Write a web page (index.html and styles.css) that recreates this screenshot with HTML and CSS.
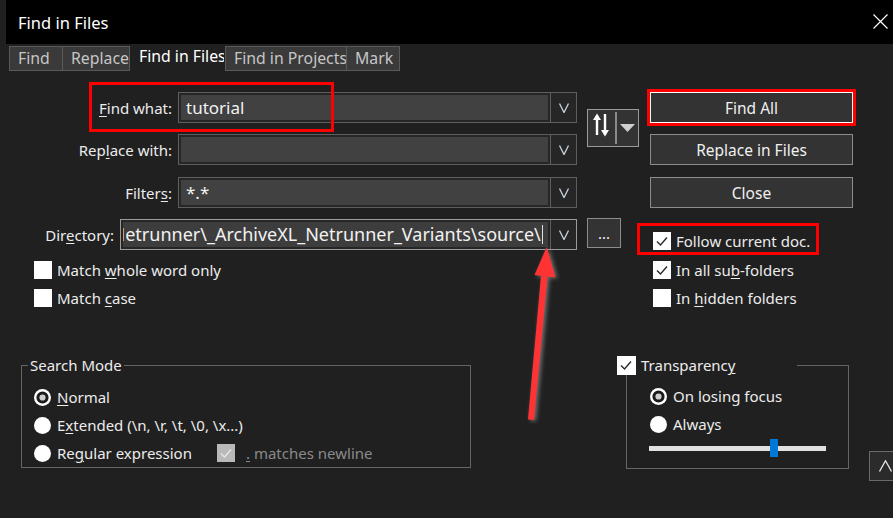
FILE: index.html
```html
<!DOCTYPE html>
<html>
<head>
<meta charset="utf-8">
<title>Find in Files</title>
<link rel="stylesheet" href="styles.css">
</head>
<body>
<div class="dialog">
  <header class="titlebar">
    <span class="title">Find in Files</span>
    <svg class="close" viewBox="0 0 15 15"><path d="M0.5 0.5 L14.5 14.5 M14.5 0.5 L0.5 14.5" stroke="#fff" stroke-width="1.2" fill="none"/></svg>
  </header>

  <nav class="tabs">
    <span class="tab t-find">Find</span>
    <span class="tab t-replace">Replace</span>
    <span class="tab active t-fif">Find in Files</span>
    <span class="tab t-fip">Find in Projects</span>
    <span class="tab t-mark">Mark</span>
  </nav>

  <div class="form">
    <label class="lbl r1"><u>F</u>ind what:</label>
    <div class="combo r1">
      <div class="field">tutorial</div>
      <div class="drop"><svg viewBox="0 0 10 10"><path d="M0.5 0.5 L5 9.5 L9.5 0.5" stroke="#c9d3e0" stroke-width="1.3" fill="none"/></svg></div>
    </div>

    <label class="lbl r3">Rep<u>l</u>ace with:</label>
    <div class="combo r3">
      <div class="field"></div>
      <div class="drop"><svg viewBox="0 0 10 10"><path d="M0.5 0.5 L5 9.5 L9.5 0.5" stroke="#c9d3e0" stroke-width="1.3" fill="none"/></svg></div>
    </div>

    <label class="lbl r5">Filter<u>s</u>:</label>
    <div class="combo r5">
      <div class="field">*.*</div>
      <div class="drop"><svg viewBox="0 0 10 10"><path d="M0.5 0.5 L5 9.5 L9.5 0.5" stroke="#c9d3e0" stroke-width="1.3" fill="none"/></svg></div>
    </div>

    <div class="dirrow r7">
      <label class="dirlbl">Dir<u>e</u>ctory:</label>
      <div class="combo focused">
        <div class="field dirfield"><span class="dirtext">Netrunner\_ArchiveXL_Netrunner_Variants\source\</span><span class="caret"></span></div>
        <div class="drop"><svg viewBox="0 0 10 10"><path d="M0.5 0.5 L5 9.5 L9.5 0.5" stroke="#c9d3e0" stroke-width="1.3" fill="none"/></svg></div>
      </div>
    </div>

    <button class="swap">
      <svg class="swap-arrows" viewBox="0 0 16 24"><path d="M4 22 V3" stroke="#fff" stroke-width="2.4"/><path d="M0 7 L4 0.5 L8 7 Z" fill="#fff"/><path d="M12 1 V20" stroke="#fff" stroke-width="2.4"/><path d="M8 17 L12 23.5 L16 17 Z" fill="#fff"/></svg>
      <span class="swap-sep"></span>
      <svg class="swap-tri" viewBox="0 0 15 8"><path d="M0 0 H15 L7.5 8 Z" fill="#cfcfcf"/></svg>
    </button>

    <button class="btn default r1">Find All</button>
    <button class="btn r3">Replace in Files</button>
    <button class="btn r5">Close</button>

    <button class="dots">...</button>

    <div class="chk follow">
      <span class="cb"><svg viewBox="0 0 18 18"><path d="M4 9.5 L7.5 13 L14 5.5" stroke="#2a2a2a" stroke-width="1.4" fill="none"/></svg></span>
      <span>Follow current doc.</span>
    </div>

    <div class="checks checks-left">
      <div class="chk"><span class="cb"></span><span>Match <u>w</u>hole word only</span></div>
      <div class="chk"><span class="cb"></span><span>Match <u>c</u>ase</span></div>
    </div>

    <div class="checks checks-right">
      <div class="chk">
        <span class="cb"><svg viewBox="0 0 18 18"><path d="M4 9.5 L7.5 13 L14 5.5" stroke="#2a2a2a" stroke-width="1.4" fill="none"/></svg></span>
        <span>In all su<u>b</u>-folders</span>
      </div>
      <div class="chk"><span class="cb"></span><span>In <u>h</u>idden folders</span></div>
    </div>
  </div>

  <div class="bottom">
    <fieldset class="group search">
      <legend>Search Mode</legend>
      <div class="radio">
        <svg class="rd" viewBox="0 0 17 17"><circle cx="8.5" cy="8.5" r="8.5" fill="#fff"/><circle cx="8.5" cy="8.5" r="4.6" fill="#cfcfcf" stroke="#1c1c1c" stroke-width="3"/></svg>
        <span><u>N</u>ormal</span>
      </div>
      <div class="radio">
        <svg class="rd" viewBox="0 0 17 17"><circle cx="8.5" cy="8.5" r="8.5" fill="#fff"/></svg>
        <span>E<u>x</u>tended (\n, \r, \t, \0, \x...)</span>
      </div>
      <div class="radio">
        <svg class="rd" viewBox="0 0 17 17"><circle cx="8.5" cy="8.5" r="8.5" fill="#fff"/></svg>
        <span class="rx-label">Re<u>g</u>ular expression</span>
        <span class="cb disabled"><svg viewBox="0 0 18 18"><path d="M4 9.5 L7.5 13 L14 5.5" stroke="#e6e6e6" stroke-width="1.4" fill="none"/></svg></span>
        <span class="dim"><u>.</u> matches newline</span>
      </div>
    </fieldset>

    <fieldset class="group transp">
      <legend class="tlegend">
        <span class="cb"><svg viewBox="0 0 18 18"><path d="M4 9.5 L7.5 13 L14 5.5" stroke="#2a2a2a" stroke-width="1.4" fill="none"/></svg></span>
        <span>Transparenc<u>y</u></span>
      </legend>
      <div class="radio">
        <svg class="rd" viewBox="0 0 17 17"><circle cx="8.5" cy="8.5" r="8.5" fill="#fff"/><circle cx="8.5" cy="8.5" r="4.6" fill="#cfcfcf" stroke="#1c1c1c" stroke-width="3"/></svg>
        <span>On losing focus</span>
      </div>
      <div class="radio">
        <svg class="rd" viewBox="0 0 17 17"><circle cx="8.5" cy="8.5" r="8.5" fill="#fff"/></svg>
        <span>Always</span>
      </div>
      <div class="slider">
        <span class="track"></span>
        <span class="thumb"></span>
      </div>
    </fieldset>

    <button class="mini"><svg viewBox="0 0 13 12"><path d="M0.5 11.5 L6.5 0.8 L12.5 11.5" stroke="#e6e6e6" stroke-width="1.3" fill="none"/></svg></button>
  </div>

  <div class="hl hl-find"></div>
  <div class="hl hl-follow"></div>

  <svg class="arrow" viewBox="0 0 893 518">
    <g class="arrow-shape">
      <path d="M541 276 L547.5 276.5 L534 420 L528 419.5 Z" fill="#f33"/>
      <path d="M546.7 247 L555.5 277.5 L534.5 275 Z" fill="#f33"/>
    </g>
  </svg>
</div>
</body>
</html>
```

FILE: styles.css
```css
* { box-sizing: border-box; }

body {
  margin: 0;
  background: #202020;
  font-family: "Noto Sans", "Open Sans", sans-serif;
  color: #ececec;
}

u { text-underline-offset: 2px; text-decoration-thickness: 1px; }

.dialog {
  position: relative;
  width: 893px;
  height: 518px;
  overflow: hidden;
  background: #202020;
}

/* title bar */
.titlebar {
  height: 44px;
  margin-left: 6px;
  padding: 0 5px 0 12px;
  background: #000;
  display: flex;
  align-items: center;
}
.title { font-size: 16.5px; color: #fff; }
.close { margin-left: auto; width: 15px; height: 15px; margin-top: -1px; }

/* tabs */
.tabs {
  display: flex;
  height: 25px;
  margin: 2px 0 0 9px;
}
.tab {
  height: 25px;
  border: 1px solid #5a5a5a;
  background: #3a3a3a;
  color: #c6c6c6;
  font-size: 15.8px;
  line-height: 23px;
  padding-left: 8px;
  overflow: hidden;
  white-space: nowrap;
  flex: none;
}
.t-find { width: 54px; }
.t-replace { width: 68px; margin-left: -1px; }
.t-fif { width: 95px; }
.t-fip { width: 122px; }
.t-mark { width: 54px; margin-left: -1px; }
.tab.active {
  border-color: transparent;
  background: transparent;
  color: #fff;
  line-height: 19px;
}

/* form grid */
.form {
  display: grid;
  grid-template-columns: 178px 399px 10px 52px 11px 203px;
  grid-template-rows: 31px 11px 31px 12px 31px 11px 31px 10px auto;
  margin-top: 21px;
}
.r1 { grid-row: 1; }
.r3 { grid-row: 3; }
.r5 { grid-row: 5; }
.r7 { grid-row: 7; }

.lbl {
  grid-column: 1;
  justify-self: end;
  align-self: center;
  padding-right: 6px;
  font-size: 15px;
  white-space: nowrap;
}

.combo {
  grid-column: 2;
  display: flex;
  height: 31px;
  border: 1px solid #5e5e5e;
  background: #262626;
}
.combo.focused { border-color: #9a9a9a; }
.field {
  flex: 1;
  min-width: 0;
  margin: 2px 0 2px 2px;
  background: #414141;
  padding-left: 5px;
  font-size: 17px;
  line-height: 25px;
  color: #f2f2f2;
  overflow: hidden;
  white-space: nowrap;
}
.dirfield {
  padding-left: 0;
  display: flex;
  align-items: center;
  background: #3d3d3d;
  font-size: 18px;
}
.dirtext { margin-left: -11.5px; flex: none; }
.caret { width: 1px; height: 19px; background: #e0e0e0; margin-left: 1px; flex: none; }
.drop {
  width: 26px;
  margin-left: 2px;
  border-left: 1px solid #5e5e5e;
  display: flex;
  align-items: center;
  justify-content: center;
  flex: none;
}
.drop svg { width: 10px; height: 10px; }

.dirrow {
  grid-column: 1 / 3;
  display: flex;
  justify-content: flex-end;
  align-items: center;
  gap: 6px;
}
.dirrow .combo { width: 457px; flex: none; }
.dirlbl { font-size: 15px; }

/* buttons */
button {
  font-family: inherit;
  color: #f0f0f0;
  padding: 0;
  margin: 0;
}
.btn {
  grid-column: 6;
  height: 31px;
  background: #333;
  border: 1px solid #8c8c8c;
  font-size: 15.5px;
}
.btn.default {
  border-color: #fff;
  outline: 3px solid #f00;
}

.swap {
  grid-column: 4;
  grid-row: 1 / 4;
  margin-top: 17px;
  height: 38px;
  background: #333;
  border: 1px solid #9a9a9a;
  display: flex;
  align-items: center;
  padding-left: 5px;
}
.swap-arrows { width: 16px; height: 24px; margin-top: -6px; }
.swap-sep { width: 2px; height: 32px; background: #8a8a8a; margin-left: 6px; }
.swap-tri { width: 15px; height: 8px; margin-left: 3px; }

.dots {
  grid-column: 4;
  grid-row: 7;
  justify-self: start;
  width: 34px;
  height: 30px;
  margin-top: -1px;
  background: #333;
  border: 1px solid #8c8c8c;
  font-size: 15px;
  line-height: 20px;
}

/* checkboxes */
.chk {
  display: flex;
  align-items: center;
  gap: 5px;
  height: 20px;
  font-size: 15px;
  white-space: nowrap;
}
.cb {
  width: 18px;
  height: 18px;
  background: #fff;
  flex: none;
  display: flex;
}
.cb svg { width: 18px; height: 18px; }
.cb.disabled { background: #b9b9b9; }

.follow {
  grid-column: 6;
  grid-row: 7;
  align-self: start;
  margin-top: 12px;
  padding-left: 3px;
}
.checks {
  grid-row: 9;
  display: flex;
  flex-direction: column;
  gap: 8px;
}
.checks-left { grid-column: 1 / 3; padding-left: 34px; }
.checks-right { grid-column: 6; padding-left: 3px; }

/* bottom groups */
.bottom {
  display: flex;
  align-items: flex-start;
  margin-top: 47px;
  padding-left: 21px;
}
.group {
  margin: 0;
  min-width: 0;
  border: 1px solid #646464;
  flex: none;
}
.group legend {
  font-size: 15px;
  line-height: 20px;
  padding: 0 2px;
}
.search {
  width: 450px;
  padding: 8px 0 0 12px;
}
.search legend { margin-left: -6px; }

.radio {
  display: flex;
  align-items: center;
  gap: 6px;
  height: 28px;
  font-size: 15px;
  white-space: nowrap;
}
.rd { width: 17px; height: 17px; flex: none; }
.rx-label { width: 154px; flex: none; }
.radio .cb { margin-right: 5px; }
.dim { color: #8a8a8a; }

.transp {
  width: 223px;
  margin-left: 155px;
  padding: 7px 0 10px 23px;
}
.group .tlegend {
  margin-left: -33px;
  display: flex;
  align-items: center;
  gap: 5px;
  padding: 0 62px 0 0;
}
.tlegend .cb { width: 19px; height: 19px; }

.slider {
  display: grid;
  align-items: center;
  width: 177px;
  height: 20px;
  margin-left: -1px;
}
.track { grid-area: 1 / 1; height: 5px; background: #e1e1e1; }
.thumb {
  grid-area: 1 / 1;
  justify-self: start;
  margin-left: 121px;
  width: 8px;
  height: 18px;
  background: #0078d7;
}

.mini {
  flex: none;
  width: 30px;
  height: 30px;
  margin: 96px 0 0 20px;
  background: #2b2b2b;
  border: 1px solid #6a6a6a;
  display: flex;
  align-items: center;
  padding-left: 9px;
}
.mini svg { width: 13px; height: 12px; }

/* annotations */
.hl {
  position: absolute;
  border: 3px solid #f00;
  pointer-events: none;
}
.hl-find { left: 89px; top: 82px; width: 245px; height: 50px; }
.hl-follow { left: 637px; top: 223px; width: 182px; height: 32px; }

.arrow {
  position: absolute;
  left: 0;
  top: 0;
  width: 893px;
  height: 518px;
  pointer-events: none;
}
.arrow-shape { filter: drop-shadow(2px 1px 2px rgba(150,150,150,0.7)); }
```
